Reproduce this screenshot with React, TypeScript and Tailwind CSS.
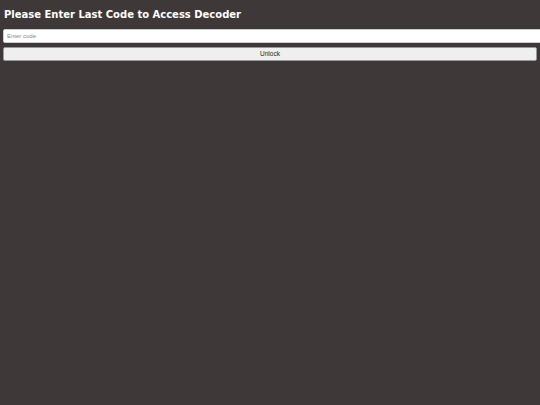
export default function App() {
  return (
    <div className="min-h-screen bg-[#3e3838] px-[3px] pt-[7px] font-['DejaVu_Sans',sans-serif] overflow-hidden">
      <h1 className="text-[10px] font-bold text-white leading-[16px] pl-[1px]">
        Please Enter Last Code to Access Decoder
      </h1>
      <div className="mt-[6px] flex flex-col">
        <input
          type="text"
          placeholder="Enter code"
          className="box-content w-full h-[12px] px-[3px] bg-white border border-[#ccc] rounded-[2px] text-[6px] font-['Liberation_Sans',sans-serif] placeholder:text-[#888] outline-none"
        />
        <button className="mt-[4px] w-full h-[14px] bg-[#efefef] border border-[#999] rounded-[2px] text-[6.5px] text-[#222] font-['Liberation_Sans',sans-serif]">
          Unlock
        </button>
      </div>
    </div>
  );
}
